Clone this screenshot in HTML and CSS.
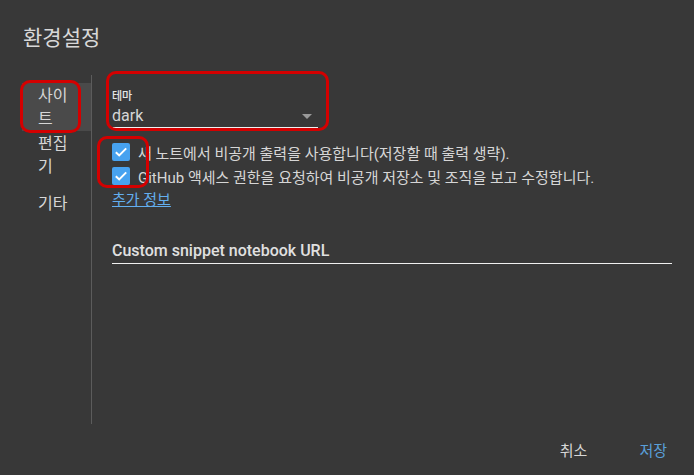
FILE: index.html
```html
<!DOCTYPE html>
<html lang="ko">
<head>
<meta charset="utf-8">
<link rel="stylesheet" href="styles.css">
</head>
<body>
<div class="dialog">
  <h1 class="title">환경설정</h1>
  <div class="main">
    <nav class="side">
      <div class="item selected">사이트</div>
      <div class="item">편집기</div>
      <div class="item">기타</div>
    </nav>
    <section class="content">
      <div class="select">
        <div class="label">테마</div>
        <div class="value"><span>dark</span><span class="arrow"></span></div>
      </div>
      <div class="checks">
        <label class="check"><span class="box"><svg viewBox="0 0 18 18" width="18" height="18"><path d="M3.8 9.2 L7.2 12.4 L14.2 5.4" fill="none" stroke="#fff" stroke-width="2"/></svg></span>새 노트에서 비공개 출력을 사용합니다(저장할 때 출력 생략).</label>
        <label class="check"><span class="box"><svg viewBox="0 0 18 18" width="18" height="18"><path d="M3.8 9.2 L7.2 12.4 L14.2 5.4" fill="none" stroke="#fff" stroke-width="2"/></svg></span>GitHub 액세스 권한을 요청하여 비공개 저장소 및 조직을 보고 수정합니다.</label>
      </div>
      <a class="more" href="#">추가 정보</a>
      <div class="field">Custom snippet notebook URL</div>
    </section>
  </div>
  <div class="footer">
    <button class="btn">취소</button>
    <button class="btn primary">저장</button>
  </div>
  <div class="mark m1"></div>
  <div class="mark m2"></div>
  <div class="mark m3"></div>
</div>
</body>
</html>
```
FILE: styles.css
```css
* { box-sizing: border-box; }
html, body { margin: 0; height: 100%; }
body {
  background: #383838;
  color: #d6d6d6;
  font-family: Roboto, "Noto Sans CJK KR", sans-serif;
}
.dialog {
  position: relative;
  width: 694px;
  height: 475px;
  padding: 25px 19px 0 22px;
}
.title {
  margin: 0 0 0 1px;
  font-size: 21px;
  font-weight: 400;
  line-height: 26px;
  color: #d8d8d8;
}
.main {
  display: flex;
  margin-top: 24px;
  height: 349px;
}
.side {
  width: 70px;
  flex: none;
  border-right: 1px solid #5c5c5c;
  padding-top: 8px;
}
.item {
  min-height: 48px;
  display: flex;
  align-items: center;
  padding: 0 16px;
  font-size: 16px;
  line-height: 23px;
  color: #d6d6d6;
}
.item.selected { background: #4a4a4a; }
.content {
  flex: 1;
  padding: 15px 0 0 20px;
}
.select {
  width: 206px;
  border-bottom: 1px solid #f0f0f0;
}
.label {
  font-size: 11px;
  line-height: 14px;
  font-weight: 500;
  color: #e6e6e6;
}
.value {
  display: flex;
  justify-content: space-between;
  align-items: center;
  font-size: 16px;
  line-height: 20px;
  padding: 2px 0 1px;
  color: #d6d6d6;
}
.arrow {
  width: 0; height: 0;
  margin-right: 6px;
  border-left: 5px solid transparent;
  border-right: 5px solid transparent;
  border-top: 5px solid #9a9a9a;
}
.checks { margin-top: 12px; }
.check {
  display: flex;
  align-items: center;
  height: 24px;
  font-size: 15px;
  color: #d6d6d6;
}
.box {
  width: 18px; height: 18px;
  flex: none;
  border-radius: 2px;
  background: #47a2f0;
  margin-right: 8px;
  display: flex;
}
.more {
  display: inline-block;
  margin-top: 0;
  font-size: 15px;
  line-height: 24px;
  color: #63aeee;
  text-decoration: underline;
}
.field {
  margin-top: 29px;
  width: 560px;
  font-size: 16px;
  font-weight: 500;
  line-height: 20px;
  padding-bottom: 2px;
  border-bottom: 1px solid #f0f0f0;
  color: #e0e0e0;
}
.footer {
  display: flex;
  justify-content: flex-end;
  gap: 36px;
  margin-top: 11px;
}
.btn {
  background: none;
  border: 0;
  padding: 6px 8px;
  font-family: inherit;
  font-size: 15px;
  line-height: 20px;
  color: #d6d6d6;
}
.btn.primary { color: #5a9fd8; }
.mark {
  position: absolute;
  border: 3px solid #d40000;
  border-radius: 10px;
}
.m1 { left: 20px; top: 80px; width: 61px; height: 53px; }
.m2 { left: 106px; top: 71px; width: 223px; height: 60px; }
.m3 { left: 97px; top: 136px; width: 52px; height: 52px; }
```
